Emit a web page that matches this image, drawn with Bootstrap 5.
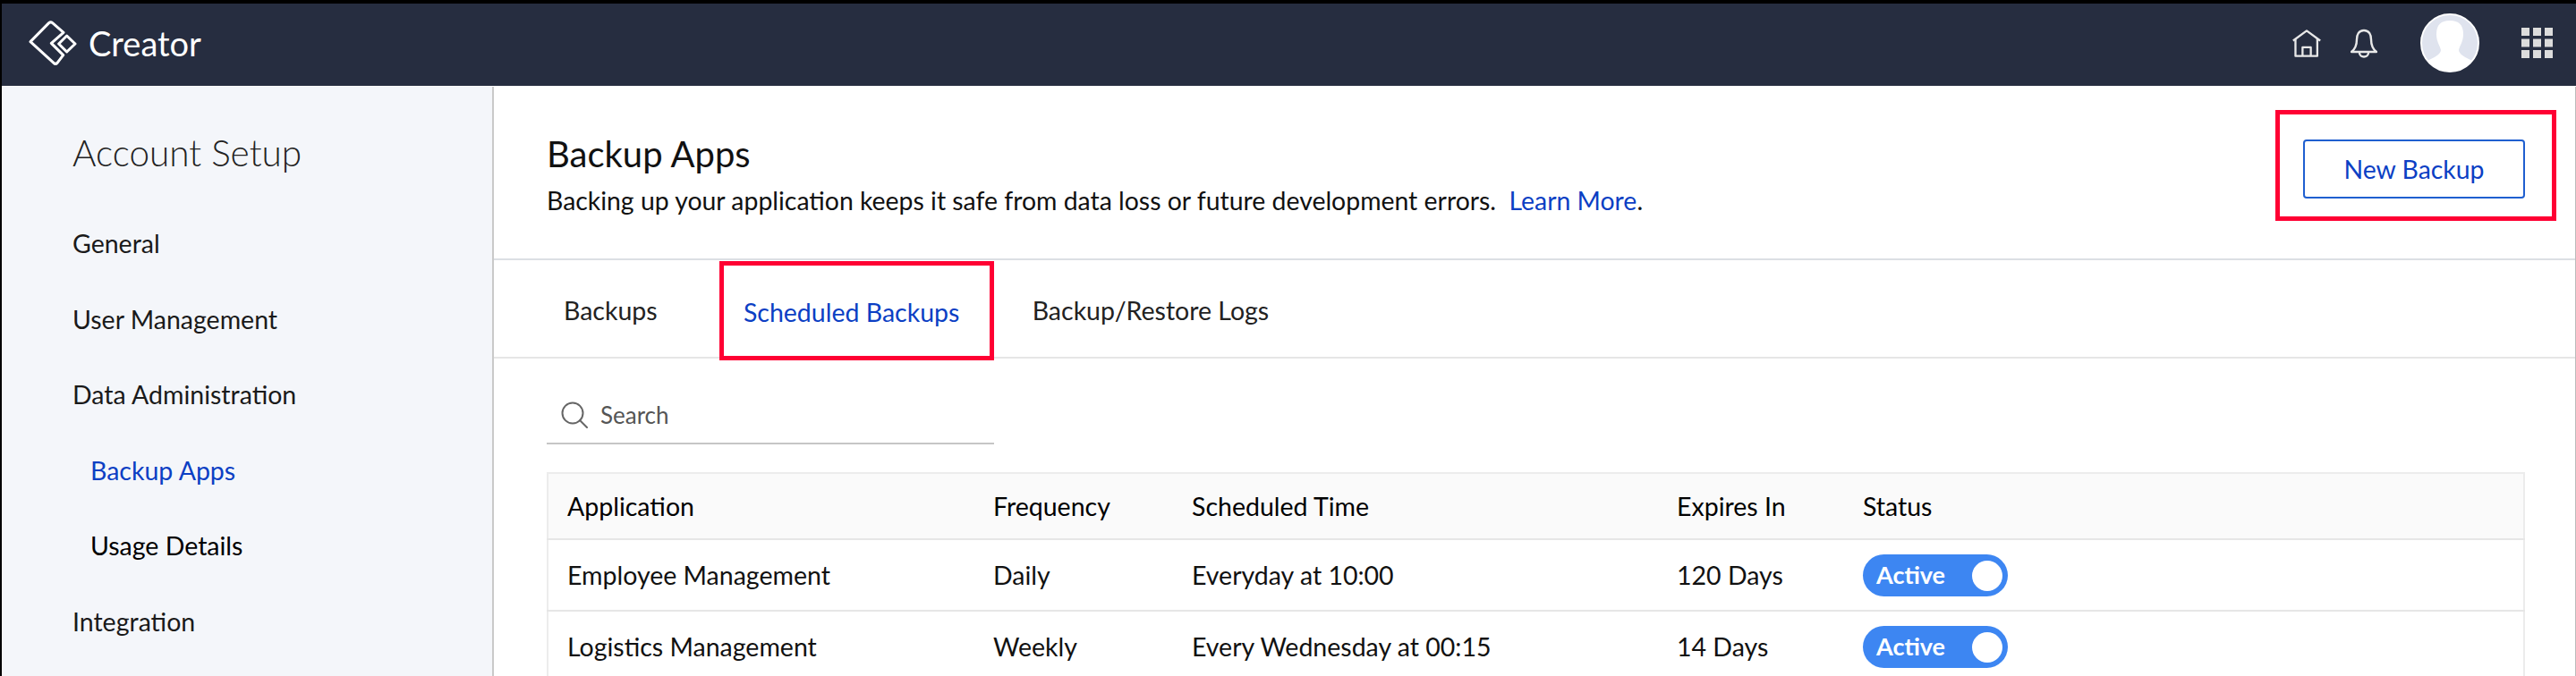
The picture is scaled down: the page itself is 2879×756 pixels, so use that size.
<!doctype html>
<html lang="en">
<head>
<meta charset="utf-8">
<title>Backup Apps</title>
<link href="https://cdn.jsdelivr.net/npm/bootstrap@5.3.0/dist/css/bootstrap.min.css" rel="stylesheet">
<style>
html,body{height:756px;overflow:hidden;background:#000}
body{font-family:Lato,"Liberation Sans",sans-serif;color:#111;padding:4px 0 0 2px;font-size:28.5px}
.top-bar{height:92px;background:#262d40;padding:0 26px 4px 30px;flex-wrap:nowrap}
.brand-name{font-size:38px;color:#fff;font-weight:400;margin-left:13px;line-height:1}
.shell{height:660px;background:#fff;border-top:1px solid #fff}
.side-pane{width:550px;flex:none;background:#f4f6fa;border-right:2px solid #c9c9c9;padding:50px 0 0 79px}
.side-title{font-size:40.500px;font-weight:300;line-height:48px;margin:0 0 57px;color:#222}
.side-link{display:block;color:#1a1a1a;text-decoration:none;font-size:28.5px;line-height:40px;margin-bottom:44.6px}
.side-link.sub{margin-left:20px;color:#000}
.side-link.sub.on{color:#0c3fc4}
.main-pane{min-width:0;border-right:1px solid #bbb}
.page-head{height:194px;border-bottom:2px solid #dcdfe4;padding:26px 21px 0 59px}
.page-copy{padding-top:27px}
.page-title{font-size:40px;font-weight:400;line-height:44px;margin:0 0 13px;color:#111}
.page-sub{font-size:28.4px;line-height:34px;margin:0;color:#111}
.page-sub a{color:#0c3fc4;text-decoration:none}
.mark-box{border:5px solid #ff0033}
.new-wrap{width:314px;height:124px}
.new-btn{width:248px;height:66px;border:2px solid #1f5fd0;color:#0c3fc4;font-size:28.4px;border-radius:4px;background:#fff;padding:0;margin:8px 4px 0 0}
.tab-row{height:110px;border-bottom:2px solid #e6e6e6;padding-left:59px;flex-wrap:nowrap}
.tab-item{height:110px;display:flex;align-items:center;font-size:28.5px;color:#222;text-decoration:none;padding:3px 19px 0}
.tab-item.on{color:#0c3fc4;width:307px;justify-content:center;margin:1px 24px 0 50px;padding:3px 11px 0 0;height:111px}
.body-pane{padding:0 55px 0 59px}
.find-box{width:500px;height:96px;border-bottom:2px solid #c6c6c6;padding:32px 0 0 16px}
.find-text{font-size:26px;color:#555;margin-left:14px}
.data-grid{margin:31px 0 0;width:2211px;table-layout:fixed;border:2px solid #ececec;border-width:2px 2px 0}
.data-grid th,.data-grid td{font-size:28.5px;padding:0 0 0 21px;vertical-align:middle;border-bottom:2px solid #e6e6e6;color:#111;box-shadow:none}
.data-grid th{height:74px;background:#fafafa;font-weight:400;color:#000}
.data-grid td{height:80px}
.state-pill{display:inline-flex;align-items:center;justify-content:space-between;width:162px;height:47px;border-radius:24px;background:#3d86f2;color:#fff;font-size:27px;font-weight:700;padding:0 6px 0 15px;vertical-align:middle}
.state-knob{width:34px;height:34px;border-radius:50%;background:#fff}
</style>
</head>
<body>
<nav class="navbar top-bar">
  <div class="d-flex align-items-center">
    <svg width="54" height="50" viewBox="34 32 162 150" fill="none" stroke="#fff" stroke-width="9" stroke-linejoin="round" aria-hidden="true"><path d="M40 103 L102 40 Q108 35 114 40 L151 72 L110 108 L150 148 L130 174 Q124 180 118 174 Z"/><path d="M135 110 L162 83 L190 110 L162 137 Z"/></svg>
    <span class="brand-name">Creator</span>
  </div>
  <div class="d-flex align-items-center">
    <svg width="32" height="31" viewBox="38 66 96 94" fill="none" stroke="#e8e8e8" stroke-width="7" stroke-linejoin="round" aria-hidden="true"><path d="M40 104 L86 70 L132 104"/><path d="M48 96 V156 H122 V96"/><path d="M72 156 V126 H100 V156"/></svg>
    <svg style="margin-left:33px" width="30" height="33" viewBox="0 0 30 33" fill="none" stroke="#e8e8e8" stroke-width="2.4" stroke-linejoin="round" aria-hidden="true"><path d="M15 2 C9 2 7 7 7 12 C7 19 5 23 1 26 H29 C25 23 23 19 23 12 C23 7 21 2 15 2 Z"/><path d="M10 27 C10 33 20 33 20 27"/></svg>
    <svg style="margin-left:48px" width="66" height="66" viewBox="0 0 66 66" aria-hidden="true"><circle cx="33" cy="33" r="32" fill="#dfe3ee" stroke="#fff" stroke-width="2"/><path d="M33 8 C23 8 18 13 18 23 C18 32 22 36 23 41 C23 46 14 50 8 53 C14 61 24 65 33 65 C42 65 52 61 58 53 C52 50 43 46 43 41 C44 36 48 32 48 23 C48 13 43 8 33 8 Z" fill="#fff"/></svg>
    <svg style="margin-left:47px" width="35" height="34" viewBox="0 0 35 34" fill="#dcdcdc" aria-hidden="true"><rect width="9" height="9"/><rect x="13" width="9" height="9"/><rect x="26" width="9" height="9"/><rect y="12.500" width="9" height="9"/><rect x="13" y="12.500" width="9" height="9"/><rect x="26" y="12.500" width="9" height="9"/><rect y="25" width="9" height="9"/><rect x="13" y="25" width="9" height="9"/><rect x="26" y="25" width="9" height="9"/></svg>
  </div>
</nav>
<div class="shell d-flex">
  <aside class="side-pane">
    <h2 class="side-title">Account Setup</h2>
    <a class="side-link" href="#">General</a>
    <a class="side-link" href="#">User Management</a>
    <a class="side-link" href="#">Data Administration</a>
    <a class="side-link sub on" href="#">Backup Apps</a>
    <a class="side-link sub" href="#">Usage Details</a>
    <a class="side-link" href="#">Integration</a>
  </aside>
  <main class="main-pane flex-grow-1">
    <header class="page-head d-flex justify-content-between align-items-start">
      <div class="page-copy">
        <h1 class="page-title">Backup Apps</h1>
        <p class="page-sub">Backing up your application keeps it safe from data loss or future development errors.&nbsp; <a href="#">Learn More</a>.</p>
      </div>
      <div class="mark-box new-wrap d-flex align-items-center justify-content-center">
        <button type="button" class="btn new-btn">New Backup</button>
      </div>
    </header>
    <nav class="nav tab-row align-items-start">
      <a class="tab-item" href="#">Backups</a>
      <a class="tab-item on mark-box" href="#">Scheduled Backups</a>
      <a class="tab-item" href="#">Backup/Restore Logs</a>
    </nav>
    <section class="body-pane">
      <div class="find-box d-flex align-items-center">
        <svg width="30" height="30" viewBox="0 0 30 30" fill="none" stroke="#666" stroke-width="2" stroke-linecap="round" aria-hidden="true"><circle cx="13" cy="13" r="11.500"/><path d="M21 21 L29 29"/></svg>
        <span class="find-text">Search</span>
      </div>
      <table class="table data-grid">
        <colgroup><col style="width:477px"><col style="width:222px"><col style="width:542px"><col style="width:208px"><col></colgroup>
        <thead><tr><th>Application</th><th>Frequency</th><th>Scheduled Time</th><th>Expires In</th><th>Status</th></tr></thead>
        <tbody>
          <tr><td>Employee Management</td><td>Daily</td><td>Everyday at 10:00</td><td>120 Days</td><td><span class="state-pill">Active<span class="state-knob"></span></span></td></tr>
          <tr><td>Logistics Management</td><td>Weekly</td><td>Every Wednesday at 00:15</td><td>14 Days</td><td><span class="state-pill">Active<span class="state-knob"></span></span></td></tr>
        </tbody>
      </table>
    </section>
  </main>
</div>
<script src="https://cdn.jsdelivr.net/npm/bootstrap@5.3.0/dist/js/bootstrap.bundle.min.js"></script>
</body>
</html>
